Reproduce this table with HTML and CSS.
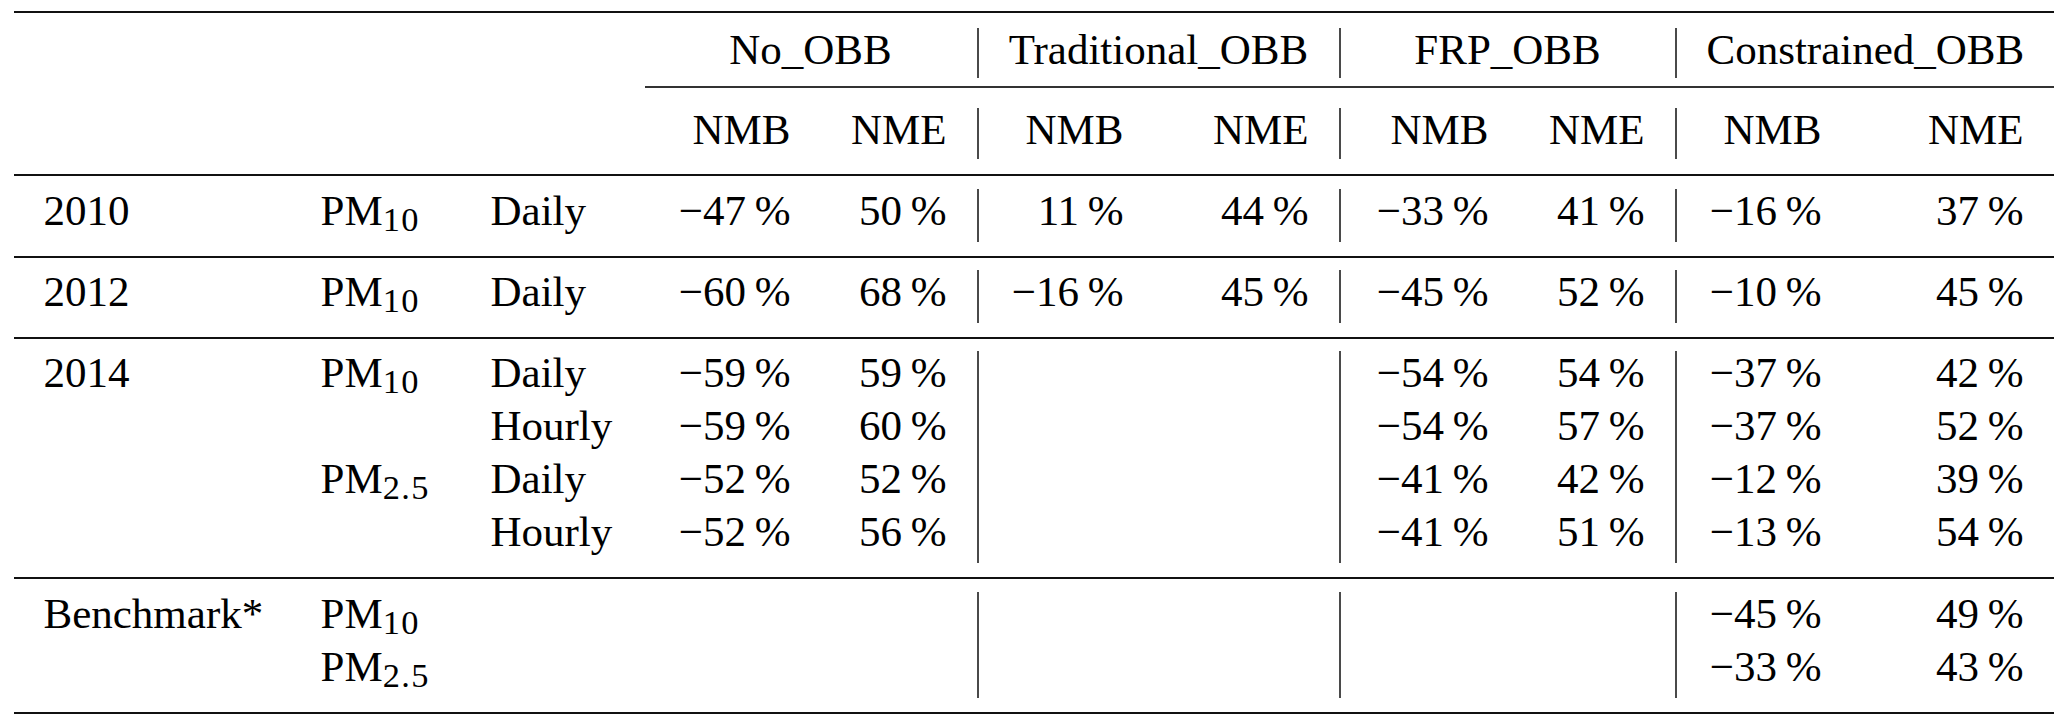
FILE: index.html
```
<!DOCTYPE html>
<html lang="en">
<head>
  <meta charset="UTF-8">
  <meta name="viewport" content="width=device-width, initial-scale=1.0">
  <title>NMB and NME of simulated PM</title>
  <link rel="stylesheet" href="styles.css">
</head>
<body>
  <table class="stats">
    <colgroup>
      <col class="col-year">
      <col class="col-species">
      <col class="col-res">
      <col class="col-no-nmb">
      <col class="col-no-nme">
      <col class="col-trad-nmb">
      <col class="col-trad-nme">
      <col class="col-frp-nmb">
      <col class="col-frp-nme">
      <col class="col-con-nmb">
      <col class="col-con-nme">
    </colgroup>
    <thead>
      <tr class="sep sep-top"><td colspan="11"><div class="rule"></div></td></tr>
      <tr class="head-group">
        <th colspan="3"></th>
        <th colspan="2">No_OBB</th>
        <th colspan="2" class="bar">Traditional_OBB</th>
        <th colspan="2" class="bar">FRP_OBB</th>
        <th colspan="2" class="bar">Constrained_OBB</th>
      </tr>
      <tr class="sep sep-cmid"><td colspan="3"></td><td colspan="8"><div class="rule rule-cmid"></div></td></tr>
      <tr class="head-metric">
        <th colspan="3"></th>
        <th class="num">NMB</th><th class="num">NME</th>
        <th class="num bar">NMB</th><th class="num">NME</th>
        <th class="num bar">NMB</th><th class="num">NME</th>
        <th class="num bar">NMB</th><th class="num">NME</th>
      </tr>
      <tr class="sep"><td colspan="11"><div class="rule"></div></td></tr>
    </thead>
    <tbody>
      <tr>
        <td>2010</td><td>PM<sub>10</sub></td><td>Daily</td>
        <td class="num">&minus;47&thinsp;%</td><td class="num">50&thinsp;%</td>
        <td class="num bar">11&thinsp;%</td><td class="num">44&thinsp;%</td>
        <td class="num bar">&minus;33&thinsp;%</td><td class="num">41&thinsp;%</td>
        <td class="num bar">&minus;16&thinsp;%</td><td class="num">37&thinsp;%</td>
      </tr>
      <tr class="sep sep-mid"><td colspan="11"><div class="rule"></div></td></tr>
      <tr>
        <td>2012</td><td>PM<sub>10</sub></td><td>Daily</td>
        <td class="num">&minus;60&thinsp;%</td><td class="num">68&thinsp;%</td>
        <td class="num bar">&minus;16&thinsp;%</td><td class="num">45&thinsp;%</td>
        <td class="num bar">&minus;45&thinsp;%</td><td class="num">52&thinsp;%</td>
        <td class="num bar">&minus;10&thinsp;%</td><td class="num">45&thinsp;%</td>
      </tr>
      <tr class="sep sep-mid"><td colspan="11"><div class="rule"></div></td></tr>
      <tr>
        <td>2014</td><td>PM<sub>10</sub></td><td>Daily</td>
        <td class="num">&minus;59&thinsp;%</td><td class="num">59&thinsp;%</td>
        <td class="num bar"></td><td class="num"></td>
        <td class="num bar">&minus;54&thinsp;%</td><td class="num">54&thinsp;%</td>
        <td class="num bar">&minus;37&thinsp;%</td><td class="num">42&thinsp;%</td>
      </tr>
      <tr>
        <td></td><td></td><td>Hourly</td>
        <td class="num">&minus;59&thinsp;%</td><td class="num">60&thinsp;%</td>
        <td class="num bar"></td><td class="num"></td>
        <td class="num bar">&minus;54&thinsp;%</td><td class="num">57&thinsp;%</td>
        <td class="num bar">&minus;37&thinsp;%</td><td class="num">52&thinsp;%</td>
      </tr>
      <tr>
        <td></td><td>PM<sub>2.5</sub></td><td>Daily</td>
        <td class="num">&minus;52&thinsp;%</td><td class="num">52&thinsp;%</td>
        <td class="num bar"></td><td class="num"></td>
        <td class="num bar">&minus;41&thinsp;%</td><td class="num">42&thinsp;%</td>
        <td class="num bar">&minus;12&thinsp;%</td><td class="num">39&thinsp;%</td>
      </tr>
      <tr>
        <td></td><td></td><td>Hourly</td>
        <td class="num">&minus;52&thinsp;%</td><td class="num">56&thinsp;%</td>
        <td class="num bar"></td><td class="num"></td>
        <td class="num bar">&minus;41&thinsp;%</td><td class="num">51&thinsp;%</td>
        <td class="num bar">&minus;13&thinsp;%</td><td class="num">54&thinsp;%</td>
      </tr>
      <tr class="sep sep-mid2"><td colspan="11"><div class="rule"></div></td></tr>
      <tr>
        <td>Benchmark*</td><td>PM<sub>10</sub></td><td></td>
        <td class="num"></td><td class="num"></td>
        <td class="num bar"></td><td class="num"></td>
        <td class="num bar"></td><td class="num"></td>
        <td class="num bar">&minus;45&thinsp;%</td><td class="num">49&thinsp;%</td>
      </tr>
      <tr>
        <td></td><td>PM<sub>2.5</sub></td><td></td>
        <td class="num"></td><td class="num"></td>
        <td class="num bar"></td><td class="num"></td>
        <td class="num bar"></td><td class="num"></td>
        <td class="num bar">&minus;33&thinsp;%</td><td class="num">43&thinsp;%</td>
      </tr>
      <tr class="sep sep-bottom"><td colspan="11"><div class="rule"></div></td></tr>
    </tbody>
  </table>
</body>
</html>
```

FILE: styles.css
```
body {
  margin: 0;
  background-color: #fff;
  color: #000;
  font-family: "Liberation Serif", "Times New Roman", serif;
}

.stats {
  width: 2040px;
  margin: 11px auto 0;
  table-layout: fixed;
  border-collapse: separate;
  border-spacing: 0;
  font-size: 43px;
}

.col-year { width: 277px; }
.col-species { width: 170px; }
.col-res { width: 184px; }
.col-no-nmb { width: 176px; }
.col-no-nme { width: 156px; }
.col-trad-nmb { width: 177px; }
.col-trad-nme { width: 185px; }
.col-frp-nmb { width: 180px; }
.col-frp-nme { width: 156px; }
.col-con-nmb { width: 177px; }
.col-con-nme { width: 202px; }

.stats td,
.stats th {
  height: 53px;
  padding: 0 30px;
  line-height: 43px;
  vertical-align: top;
  text-align: left;
  font-weight: normal;
  white-space: nowrap;
}

.stats .num {
  text-align: right;
}

.head-group th {
  height: 50px;
  text-align: center;
}

.head-metric th {
  height: 51px;
}

.stats .bar {
  border-left: 2px solid #4a4a4a;
}

.stats sub {
  font-size: 0.8em;
  line-height: 0;
  vertical-align: -0.17em;
  letter-spacing: 0.04em;
}

/* booktabs-like rules */
.stats .sep td {
  height: auto;
  padding: 15px 0 13px;
  line-height: 0;
  font-size: 0;
}

.stats .sep-top td {
  padding: 0 0 15px;
}

.stats .sep-cmid td {
  padding: 8px 0 20px;
}

.stats .sep-mid td {
  padding: 14px 0 12px;
}

.stats .sep-mid2 td {
  padding: 14px 0 13px;
}

.stats .sep-bottom td {
  padding: 14px 0 0;
}

.rule {
  height: 2px;
  background-color: #111;
}

.rule-cmid {
  background-color: #333;
}
```
